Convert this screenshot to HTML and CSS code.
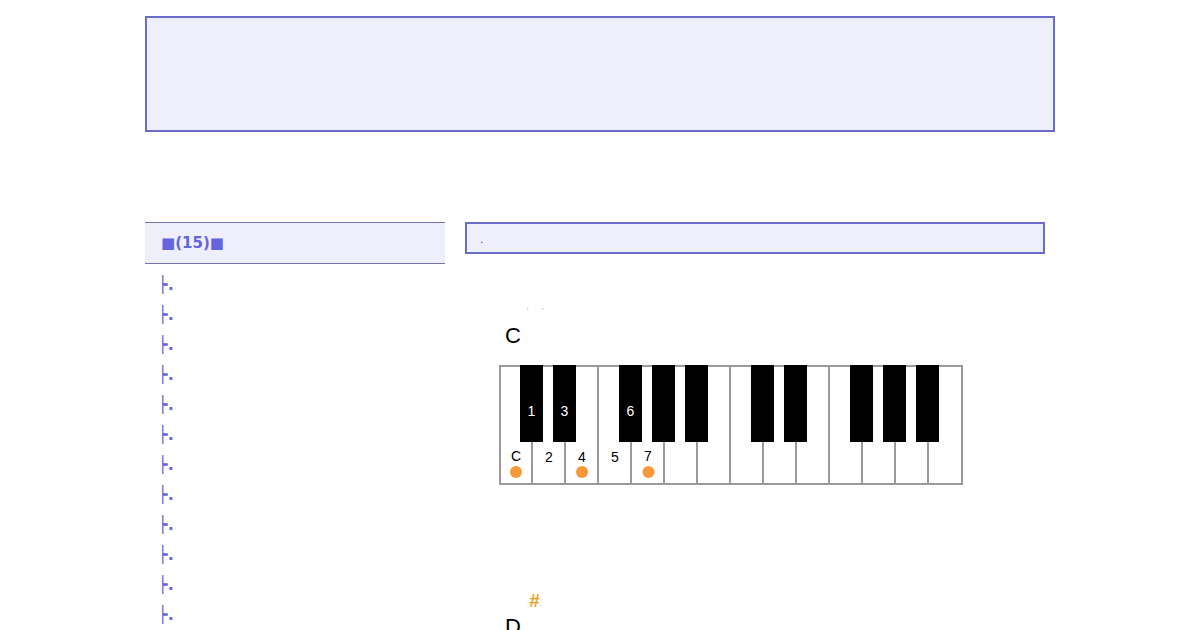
FILE: index.html
```html
<!DOCTYPE html>
<html>
<head>
<meta charset="utf-8">
<link rel="stylesheet" href="styles.css">
</head>
<body>
<div class="page">
  <div class="top-box"></div>
  <div class="columns">
    <aside class="sidebar">
      <div class="side-head">■(15)■</div>
      <ul class="side-list">
        <li>┝.</li><li>┝.</li><li>┝.</li><li>┝.</li><li>┝.</li>
        <li>┝.</li><li>┝.</li><li>┝.</li><li>┝.</li><li>┝.</li>
        <li>┝.</li><li>┝.</li><li>┝.</li><li>┝.</li><li>┕.</li>
      </ul>
    </aside>
    <main class="main">
      <div class="main-box">.</div>
      <section class="scale">
        <div class="marks"><span>'</span><span>'</span></div>
        <div class="key-name">C</div>
        <svg class="keyboard" width="464" height="120" viewBox="0 0 464 120">
          <rect x="1" y="1" width="462" height="118" fill="#fff" stroke="#9a9a9a" stroke-width="2"/>
          <g stroke="#9a9a9a" stroke-width="2">
            <line x1="33" y1="1" x2="33" y2="119"/>
            <line x1="66" y1="1" x2="66" y2="119"/>
            <line x1="99" y1="1" x2="99" y2="119"/>
            <line x1="132" y1="1" x2="132" y2="119"/>
            <line x1="165" y1="1" x2="165" y2="119"/>
            <line x1="198" y1="1" x2="198" y2="119"/>
            <line x1="231" y1="1" x2="231" y2="119"/>
            <line x1="264" y1="1" x2="264" y2="119"/>
            <line x1="297" y1="1" x2="297" y2="119"/>
            <line x1="330" y1="1" x2="330" y2="119"/>
            <line x1="363" y1="1" x2="363" y2="119"/>
            <line x1="396" y1="1" x2="396" y2="119"/>
            <line x1="429" y1="1" x2="429" y2="119"/>
          </g>
          <g fill="#000">
            <rect x="21" y="0" width="23" height="77"/>
            <rect x="54" y="0" width="23" height="77"/>
            <rect x="120" y="0" width="23" height="77"/>
            <rect x="153" y="0" width="23" height="77"/>
            <rect x="186" y="0" width="23" height="77"/>
            <rect x="252" y="0" width="23" height="77"/>
            <rect x="285" y="0" width="23" height="77"/>
            <rect x="351" y="0" width="23" height="77"/>
            <rect x="384" y="0" width="23" height="77"/>
            <rect x="417" y="0" width="23" height="77"/>
          </g>
          <g font-family="Liberation Sans, Arial, sans-serif" font-size="14" text-anchor="middle">
            <text x="32.5" y="51" fill="#fff">1</text>
            <text x="65.5" y="51" fill="#fff">3</text>
            <text x="131.5" y="51" fill="#fff">6</text>
            <text x="17" y="96" fill="#000">C</text>
            <text x="50" y="97" fill="#000">2</text>
            <text x="83" y="97" fill="#000">4</text>
            <text x="116" y="97" fill="#000">5</text>
            <text x="149" y="96" fill="#000">7</text>
          </g>
          <g fill="#f7983a">
            <circle cx="17" cy="107" r="6"/>
            <circle cx="83" cy="107" r="6"/>
            <circle cx="149.5" cy="107" r="6"/>
          </g>
        </svg>
      </section>
      <section class="scale next">
        <div class="marks sharp"><span class="dot">.</span><span class="hash">#</span><span class="dot">.</span></div>
        <div class="key-name">D</div>
      </section>
    </main>
  </div>
</div>
</body>
</html>
```

FILE: styles.css
```css
html, body {
  margin: 0;
  padding: 0;
  background: #fff;
}
body {
  font-family: "DejaVu Sans", sans-serif;
}
.page {
  width: 910px;
  margin: 0 auto;
  padding-top: 16px;
}
.top-box {
  box-sizing: border-box;
  height: 116px;
  border: 2px solid #6b6bcc;
  background: #efeffb;
}
.columns {
  display: flex;
  gap: 20px;
  margin-top: 90px;
}
.sidebar {
  width: 300px;
  flex: none;
}
.side-head {
  box-sizing: border-box;
  height: 42px;
  border-top: 1px solid #7474b4;
  border-bottom: 1px solid #7474b4;
  background: #efeffb;
  color: #6464dc;
  font-weight: bold;
  font-size: 15px;
  line-height: 40px;
  padding-left: 16px;
}
.side-list {
  list-style: none;
  margin: 0;
  padding: 6px 0 0 13px;
}
.side-list li {
  height: 30px;
  line-height: 30px;
  font-size: 16px;
  font-weight: bold;
  color: #6464dc;
}
.main {
  width: 580px;
  flex: none;
}
.main-box {
  box-sizing: border-box;
  height: 32px;
  border: 2px solid #6b6bcc;
  background: #efeffb;
  color: #555;
  font-size: 11px;
  line-height: 32px;
  padding-left: 13px;
}
.scale {
  padding-left: 34px;
  padding-top: 50px;
  font-family: "Liberation Sans", Arial, sans-serif;
}
.marks {
  display: flex;
  gap: 14px;
  padding-left: 28px;
  height: 14px;
  font-size: 7px;
  color: #888;
  line-height: 14px;
}
.key-name {
  font-size: 22px;
  line-height: 26px;
  margin-top: 5px;
  padding-left: 6px;
  color: #000;
}
.keyboard {
  display: block;
  margin-top: 16px;
}
.scale.next {
  padding-top: 106px;
}
.marks.sharp {
  gap: 0;
  padding-left: 28px;
  font-size: 19px;
  line-height: 20px;
  height: 20px;
  color: #888;
}
.marks.sharp .dot {
  font-size: 8px;
  line-height: 26px;
}
.marks.sharp .hash {
  color: #e6a31c;
  font-weight: bold;
}
.marks.sharp + .key-name {
  margin-top: 3px;
}
```
